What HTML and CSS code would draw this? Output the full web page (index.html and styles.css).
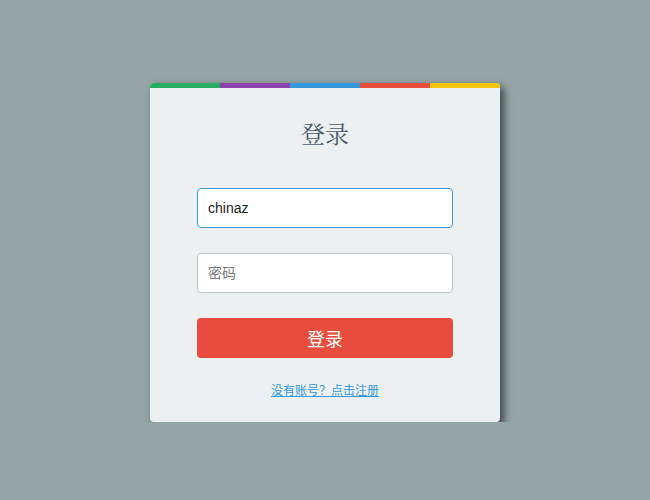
FILE: index.html
```html
<!DOCTYPE html>
<html lang="zh">

<head>
    <meta charset="UTF-8">
    <meta name="viewport" content="width=device-width, initial-scale=1.0">
    <title>登录</title>
    <link rel="stylesheet" href="styles.css">
</head>

<body>
    <div class="login-box">
        <div class="stripe">
            <span class="green"></span>
            <span class="purple"></span>
            <span class="blue"></span>
            <span class="red"></span>
            <span class="yellow"></span>
        </div>
        <div class="login-body">
            <h1 class="login-title">登录</h1>
            <input class="field active" type="text" value="chinaz">
            <input class="field" type="password" placeholder="密码">
            <button class="login-btn">登录</button>
            <a class="register" href="#">没有账号？点击注册</a>
        </div>
    </div>
</body>

</html>
```

FILE: styles.css
```css
body {
    background-color: #95a5a6;
    margin: 0;
    padding: 83px 0 0;
    display: flex;
    justify-content: center;
    font-family: Arial, "Liberation Sans", "Noto Sans CJK SC", sans-serif;
}

.login-box {
    width: 350px;
    background-color: #ecf0f1;
    border-radius: 4px;
    overflow: hidden;
    box-shadow: 4px 4px 9px rgba(0, 0, 0, 0.6);
}

.stripe {
    display: flex;
    height: 5px;
}

.stripe span {
    flex: 1;
}

.green { background-color: #27ae60; }
.purple { background-color: #8e44ad; }
.blue { background-color: #3498db; }
.red { background-color: #e74c3c; }
.yellow { background-color: #f1c40f; }

.login-body {
    display: flex;
    flex-direction: column;
    align-items: center;
    padding: 30px 47px 22px;
}

.login-title {
    margin: 0 0 40px;
    font-size: 24px;
    line-height: 30px;
    font-weight: normal;
    color: #4a5a6a;
    font-family: "Noto Serif CJK SC", "Noto Sans CJK SC", serif;
}

.field {
    box-sizing: border-box;
    width: 256px;
    height: 40px;
    margin: 0 0 25px;
    padding: 0 10px;
    border: 1px solid #bdc3c7;
    border-radius: 4px;
    background-color: white;
    font-size: 14px;
    color: #222;
    font-family: Arial, "Liberation Sans", "Noto Sans CJK SC", sans-serif;
    outline: none;
}

.field.active {
    border-color: #3498db;
}

.field::placeholder {
    color: #777;
    font-size: 14px;
}

.login-btn {
    width: 256px;
    height: 40px;
    border: none;
    border-radius: 4px;
    background-color: #e74c3c;
    color: white;
    font-size: 18px;
    font-family: "Noto Sans CJK SC", sans-serif;
    cursor: pointer;
}

.register {
    margin-top: 22px;
    line-height: 20px;
    font-size: 12px;
    color: #3498db;
    font-family: "Noto Sans CJK SC", sans-serif;
}
```
